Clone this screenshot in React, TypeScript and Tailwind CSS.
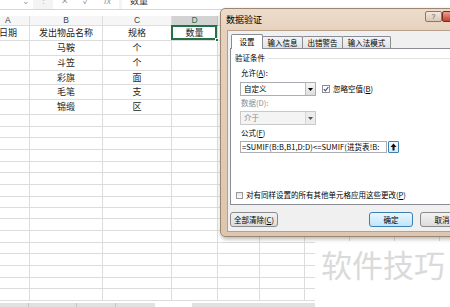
import React from 'react';

const colW = ['w-[30px]', 'w-[73px]', 'w-[69px]', 'w-[46px]', 'w-[42px]', 'w-[45px]', 'w-[45px]', 'w-[45px]', 'w-[45px]', 'w-[45px]'];
const letters = ['A', 'B', 'C', 'D', 'E', 'F', 'G', 'H', 'I', 'J'];

const dataRows: { h: string; cells: string[] }[] = [
  { h: 'h-[15px]', cells: ['', '马鞍', '个'] },
  { h: 'h-[15px]', cells: ['', '斗笠', '个'] },
  { h: 'h-[14px]', cells: ['', '彩旗', '面'] },
  { h: 'h-[15px]', cells: ['', '毛笔', '支'] },
  { h: 'h-[15px]', cells: ['', '锦缎', '区'] },
];
const emptyRows = ['h-[12px]', 'h-[11px]', 'h-[12px]', 'h-[12px]', 'h-[11px]', 'h-[12px]', 'h-[12px]', 'h-[11px]', 'h-[11px]', 'h-[12px]', 'h-[12px]', 'h-[11px]', 'h-[12px]', 'h-[12px]', 'h-[11px]', 'h-[12px]'];

const cell = 'shrink-0 border-r border-b border-[#dcdcdc] flex items-center justify-center overflow-hidden';

function Arrow({ light }: { light?: boolean }) {
  return (
    <svg width="5" height="3" viewBox="0 0 5 3"><polygon points="0,0 5,0 2.5,3" fill={light ? '#555' : '#000'} /></svg>
  );
}

function Check() {
  return (
    <svg width="6" height="6" viewBox="0 0 6 6"><path d="M0.8 3.2 L2.4 4.8 L5.3 1" fill="none" stroke="#3b5494" strokeWidth="1.2" /></svg>
  );
}

function Combo({ text, disabled }: { text: string; disabled?: boolean }) {
  return (
    <div className={`w-[76px] h-[14px] flex border ${disabled ? 'bg-[#f4f4f4] border-[#c9c9c9] text-[#8a8a8a]' : 'bg-white border-[#abadb3] text-black'}`}>
      <div className="flex-1 pl-[3px] leading-[12px]">{text}</div>
      <div className={`w-[10px] flex items-center justify-center border-l ${disabled ? 'border-[#d5d5d5] bg-[#ececec]' : 'border-[#bdbdbd] bg-[linear-gradient(#f6f6f6,#dedede)]'}`}>
        <Arrow light={disabled} />
      </div>
    </div>
  );
}

function Btn({ label, primary, className = '' }: { label: React.ReactNode; primary?: boolean; className?: string }) {
  return (
    <div className={`h-[15px] flex items-center justify-center rounded-[3px] border ${primary ? 'border-[#3c7fb1] bg-[linear-gradient(#eaf6fd,#bee6fd)]' : 'border-[#8a8a8a] bg-[linear-gradient(#f3f3f3,#dcdcdc)]'} ${className}`}>
      {label}
    </div>
  );
}

export default function App() {
  return (
    <div className="relative w-[450px] h-[307px] overflow-hidden bg-white text-[#222] font-['Noto_Sans_CJK_SC','Noto_Sans',sans-serif]">
      {/* formula bar, cut at top */}
      <div className="h-[10px] overflow-hidden bg-[#f4f4f4] border-b border-[#d6d6d6]">
        <div className="flex items-center h-[16px] -mt-[7px] text-[9px] text-[#999]">
          <div className="w-[33px] h-full bg-white flex items-center justify-end pr-[3px]">⌄</div>
          <div className="w-[20px] text-center text-[#bbb]">⋮</div>
          <div className="w-[66px] h-full bg-white flex items-center gap-[14px] pl-[8px] text-[9px]">
            <span>✕</span><span>✓</span><span className="italic">fx</span>
          </div>
          <div className="ml-[3px] flex-1 h-full bg-white flex items-center pl-[8px] text-[#333]">数量</div>
        </div>
      </div>
      <div className="h-[6px]" />

      {/* column headers */}
      <div className="flex h-[10px] text-[8.5px] text-[#444] font-['Liberation_Sans',sans-serif] bg-[#f6f6f6]">
        {letters.map((l, i) => (
          <div key={l} className={`${colW[i]} shrink-0 border-r border-b ${i === 3 ? 'bg-[#d3d3d3] border-b-[#217346] border-r-[#c6c6c6] text-[#217346]' : 'border-[#dedede]'} flex items-center ${i === 0 ? 'justify-start pl-[5px]' : 'justify-center'} leading-none`}>
            {l}
          </div>
        ))}
      </div>

      {/* first row */}
      <div className="flex h-[15px] text-[9px]">
        <div className={`${colW[0]} ${cell} !justify-start -indent-[1px]`}>日期</div>
        <div className={`${colW[1]} ${cell}`}>发出物品名称</div>
        <div className={`${colW[2]} ${cell}`}>规格</div>
        <div className={`${colW[3]} ${cell} relative !overflow-visible`}>
          数量
          <div className="absolute -left-[1px] -top-[1px] right-0 bottom-0 border-2 border-[#217346]" />
          <div className="absolute -right-[2px] -bottom-[2px] w-[4px] h-[4px] bg-[#217346] border border-white" />
        </div>
        {colW.slice(4).map((w, i) => <div key={i} className={`${w} ${cell}`} />)}
      </div>
      {dataRows.map((r, ri) => (
        <div key={ri} className={`flex ${r.h} text-[9px]`}>
          {colW.map((w, i) => <div key={i} className={`${w} ${cell}`}>{r.cells[i] ?? ''}</div>)}
        </div>
      ))}
      {emptyRows.map((h, ri) => (
        <div key={ri} className={`flex ${h}`}>
          {colW.map((w, i) => <div key={i} className={`${w} ${cell}`} />)}
        </div>
      ))}

      {/* sheet tab strip */}
      <div className="flex h-[6px] pt-[2px]">
        <div className="w-[29px] bg-[#e1e1e1] border-r border-[#c4c4c4]" />
        <div className="w-[48px] bg-[#e1e1e1] border-r border-[#c4c4c4]" />
        <div className="w-[39px] bg-[#e1e1e1] border-r border-[#c4c4c4]" />
        <div className="w-[39px] bg-[#e1e1e1]" />
        <div className="w-[37px]" />
        <div className="w-[123px] bg-[#e1e1e1]" />
      </div>

      {/* watermark */}
      <div className="absolute left-[315px] top-[241px] w-[135px] h-[66px] bg-white pl-[6px] pt-[3px] text-[31px] leading-[40px] text-[#dadada]">
        软件技巧
      </div>

      {/* data validation dialog */}
      <div className="absolute left-[220px] top-[8px] w-[260px] h-[229px] rounded-[5px] border border-[#9d8770] bg-[linear-gradient(180deg,#eddccc_0%,#e6d1bd_10%,#ddc6b0_100%)] shadow-[1px_2px_4px_rgba(0,0,0,0.3)] flex flex-col">
        <div className="h-[21px] relative pl-[5px] pt-[5px] text-[9px] leading-[11px] text-black">
          数据验证
          <div className="absolute left-[204px] top-[2px] w-[17px] h-[11px] rounded-[2px] border border-[#8a7968] bg-[linear-gradient(#f2e8de,#d9c8b8)] flex items-center justify-center text-[7px] text-[#555] font-['Liberation_Sans',sans-serif]">?</div>
          <div className="absolute left-[221px] top-[2px] w-[34px] h-[11px] rounded-[2px] border border-[#7a2a20] bg-[linear-gradient(#e9a08c,#c4402c)]" />
        </div>
        <div className="ml-[6px] mb-[4px] flex-1 bg-[#f0f0f0] border border-[#b7a08a] text-[7.5px] leading-[10px] text-black">
          <div className="pt-[3px] pl-[2px]">
            <div className="flex items-end h-[15px] pl-[1px] relative z-10">
              <div className="w-[32px] h-[15px] bg-white border border-b-0 border-[#898c95] rounded-t-[2px] flex items-center justify-center">设置</div>
              <div className="w-[41px] h-[12px] mb-[1px] -ml-[1px] bg-[linear-gradient(#f4f4f4,#e3e3e3)] border border-b-0 border-[#898c95] rounded-t-[2px] flex items-center justify-center">输入信息</div>
              <div className="w-[41px] h-[12px] mb-[1px] -ml-[1px] bg-[linear-gradient(#f4f4f4,#e3e3e3)] border border-b-0 border-[#898c95] rounded-t-[2px] flex items-center justify-center">出错警告</div>
              <div className="w-[49px] h-[12px] mb-[1px] -ml-[1px] bg-[linear-gradient(#f4f4f4,#e3e3e3)] border border-b-0 border-[#898c95] rounded-t-[2px] flex items-center justify-center">输入法模式</div>
            </div>
            <div className="-mt-[1px] h-[157px] bg-white border border-[#898c95]">
              <div className="mt-[4px] pl-[4px] flex items-center h-[10px]">
                <span>验证条件</span>
                <div className="ml-[3px] flex-1 h-px bg-[#e2e2e2]" />
              </div>
              <div className="pl-[9px]">
                <div className="mt-[5px] h-[10px] pl-[1px]">允许(<span className="underline">A</span>):</div>
                <div className="mt-[4px] flex items-center">
                  <Combo text="自定义" />
                  <div className="ml-[6px] w-[8px] h-[8px] border border-[#8e8f8f] bg-white flex items-center justify-center"><Check /></div>
                  <span className="ml-[3px]">忽略空值(<span className="underline">B</span>)</span>
                </div>
                <div className="mt-[2px] h-[10px] pl-[1px] text-[#8d8d8d]">数据(D):</div>
                <div className="mt-[3px]"><Combo text="介于" disabled /></div>
                <div className="mt-[3px] h-[10px] pl-[1px]">公式(<span className="underline">F</span>)</div>
                <div className="mt-[3px] flex items-center">
                  <div className="w-[147px] h-[12px] bg-white border border-[#abadb3] pl-[1px] leading-[10px] whitespace-nowrap overflow-hidden tracking-[0.1px]">=SUMIF(B:B,B1,D:D)&lt;=SUMIF(进货表!B:</div>
                  <div className="ml-[1px] w-[11px] h-[12px] rounded-[1px] border border-[#3c7fb1] bg-[linear-gradient(#f3f9fd,#d8ecf9)] flex items-center justify-center">
                    <svg width="7" height="8" viewBox="0 0 7 8"><path d="M3.5 0.5 L0.5 4 H2.5 V7.5 H4.5 V4 H6.5 Z" fill="#111" /></svg>
                  </div>
                </div>
              </div>
              <div className="mt-[37px] pl-[5px] flex items-center h-[10px]">
                <div className="w-[7px] h-[7px] border border-[#9a9a9a] bg-[linear-gradient(#e6e6e6,#fafafa)]" />
                <span className="ml-[3px]">对有同样设置的所有其他单元格应用这些更改(<span className="underline">P</span>)</span>
              </div>
            </div>
          </div>
          <div className="mt-[7px] flex items-center pl-[2px]">
            <Btn label={<span>全部清除(<span className="underline">C</span>)</span>} className="w-[48px]" />
            <Btn label="确定" primary className="ml-[91px] w-[44px]" />
            <Btn label="取消" className="ml-[7px] w-[44px]" />
          </div>
        </div>
      </div>
    </div>
  );
}
